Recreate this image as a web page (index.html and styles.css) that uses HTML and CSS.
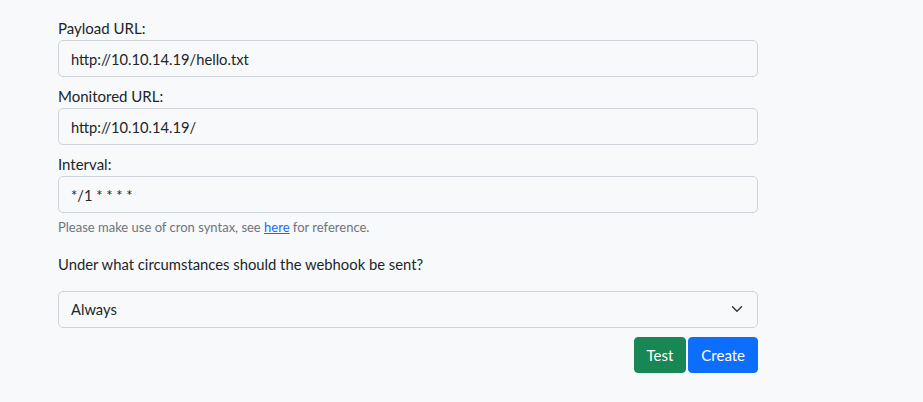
FILE: index.html
```html
<!DOCTYPE html>
<html lang="en">
<head>
<meta charset="utf-8">
<title>Webhook</title>
<link rel="stylesheet" href="styles.css">
</head>
<body>
<main class="container">
  <form class="webhook-form">
    <div class="group">
      <label class="label" for="payload">Payload URL:</label>
      <input class="control" id="payload" type="text" value="http://10.10.14.19/hello.txt">
    </div>
    <div class="group">
      <label class="label" for="monitored">Monitored URL:</label>
      <input class="control" id="monitored" type="text" value="http://10.10.14.19/">
    </div>
    <div class="group group-last">
      <label class="label" for="interval">Interval:</label>
      <input class="control" id="interval" type="text" value="*/1 * * * *">
      <div class="help">Please make use of cron syntax, see <a href="#" class="link">here</a> for reference.</div>
    </div>
    <p class="question">Under what circumstances should the webhook be sent?</p>
    <div class="select-wrap">
      <select class="control select">
        <option>Always</option>
      </select>
      <svg class="chevron" width="16" height="12" viewBox="0 0 16 16" aria-hidden="true"><path d="m2 5 6 6 6-6" fill="none" stroke="#343a40" stroke-width="2" stroke-linecap="round" stroke-linejoin="round"/></svg>
    </div>
    <div class="actions">
      <button type="button" class="btn btn-test">Test</button>
      <button type="button" class="btn btn-create">Create</button>
    </div>
  </form>
</main>
</body>
</html>
```

FILE: styles.css
```css
html, body {
  margin: 0;
  padding: 0;
  background: #f8f9fa;
}
body {
  font-family: Lato, "Noto Sans", sans-serif;
  font-size: 15px;
  line-height: 1.5;
  color: #212529;
}
.container {
  width: 700px;
  margin-left: 58px;
  padding-top: 17px;
}
.webhook-form {
  display: flex;
  flex-direction: column;
}
.group {
  display: flex;
  flex-direction: column;
  margin-bottom: 8px;
}
.group-last {
  margin-bottom: 16px;
}
.label {
  display: block;
  line-height: 23px;
}
.control {
  box-sizing: border-box;
  width: 100%;
  height: 37px;
  padding: 6px 12px;
  font-family: inherit;
  font-size: 14.7px;
  line-height: 22.5px;
  color: #212529;
  background: #f8f9fa;
  border: 1px solid #ced4da;
  border-radius: 5px;
  outline: none;
}
.help {
  margin-top: 4px;
  font-size: 13px;
  line-height: 20px;
  color: #6c757d;
}
.link {
  color: #0d6efd;
  text-decoration: underline;
}
.question {
  margin: 0 0 15px 0;
  line-height: 23px;
  font-size: 14.8px;
}
.select-wrap {
  position: relative;
}
.select {
  appearance: none;
  -webkit-appearance: none;
  display: block;
}
.chevron {
  position: absolute;
  right: 13px;
  top: 12px;
  pointer-events: none;
}
.actions {
  display: flex;
  justify-content: flex-end;
  gap: 2px;
  margin-top: 9px;
}
.btn {
  height: 36px;
  padding: 6px 12px;
  font-family: inherit;
  font-size: 15px;
  line-height: 22.5px;
  color: #fff;
  border: 1px solid transparent;
  border-radius: 4px;
}
.btn-test {
  background: #198754;
  border-color: #198754;
}
.btn-create {
  background: #0d6efd;
  border-color: #0d6efd;
}
```
